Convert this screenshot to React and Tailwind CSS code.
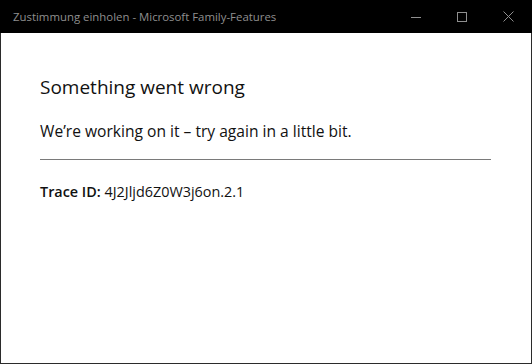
import React from "react";

const App = () => {
    return (
        <div className="w-[532px] h-[364px] bg-[#2b2b2b] flex flex-col" style={{ fontFamily: '"Open Sans", "Noto Sans", sans-serif' }}>
            <div className="h-[33px] bg-black flex items-center shrink-0">
                <span className="pl-[13px] text-[11.4px] text-[#8f8f8f] flex-1 leading-none">Zustimmung einholen - Microsoft Family-Features</span>
                <div className="flex h-full mr-[1px]">
                    <div className="w-[46px] h-full flex items-center justify-center">
                        <svg width="10" height="10" viewBox="0 0 10 10"><path d="M0 5.5H10" stroke="#8f8f8f" strokeWidth="1" /></svg>
                    </div>
                    <div className="w-[46px] h-full flex items-center justify-center">
                        <svg width="10" height="10" viewBox="0 0 10 10"><rect x="0.5" y="0.5" width="9" height="9" fill="none" stroke="#8f8f8f" strokeWidth="1" /></svg>
                    </div>
                    <div className="w-[46px] h-full flex items-center justify-center">
                        <svg width="11" height="11" viewBox="0 0 11 11"><path d="M0.5 0.5L10.5 10.5M10.5 0.5L0.5 10.5" stroke="#8f8f8f" strokeWidth="1" /></svg>
                    </div>
                </div>
            </div>
            <div className="flex-1 bg-white mx-[1px] mb-[1px] pl-[39px] pr-[40px] pt-[40px] text-[#111]">
                <h1 className="text-[19px] leading-[28px]">Something went wrong</h1>
                <p className="mt-[20px] text-[15.6px] leading-[20px]">We’re working on it – try again in a little bit.</p>
                <div className="mt-[18px] h-px bg-[#7a7a7a]" />
                <p className="mt-[22px] text-[14.4px] leading-[20px]"><span className="font-semibold">Trace ID:</span> 4J2Jljd6Z0W3j6on.2.1</p>
            </div>
        </div>
    );
};

export default App;
